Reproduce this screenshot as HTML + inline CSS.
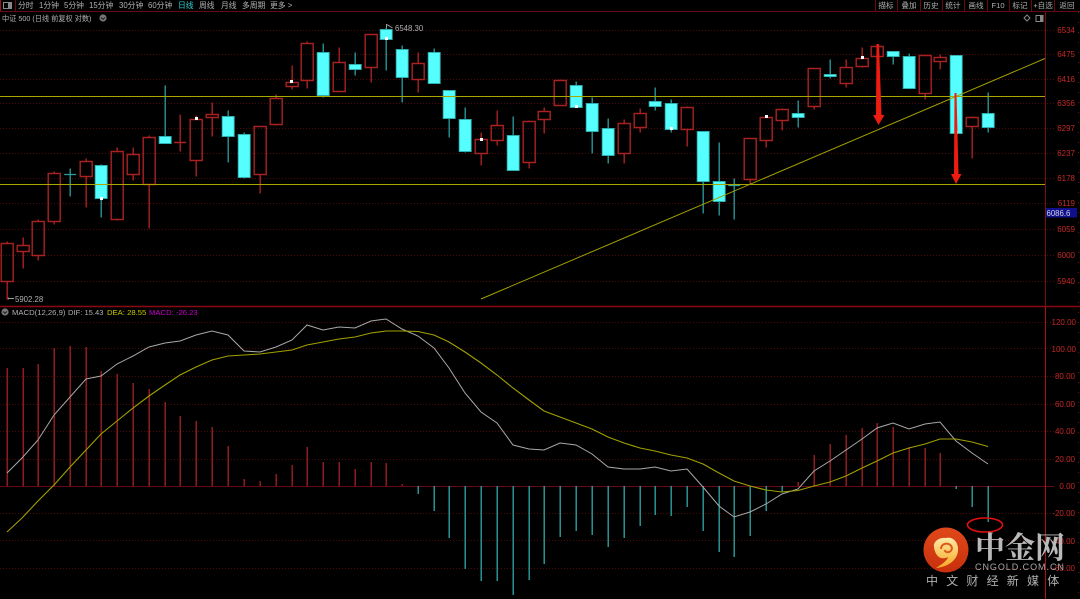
<!DOCTYPE html>
<html><head><meta charset="utf-8"><style>
html,body{margin:0;padding:0;background:#000;width:1080px;height:599px;overflow:hidden}
svg{display:block;position:absolute;left:0;top:0}
text{font-family:"Liberation Sans","Noto Sans CJK SC",sans-serif;font-size:7.8px;fill:#b0b0b0}
.ax text{fill:#c42828;font-size:8px;text-anchor:end}
.tb text{font-size:7.8px;fill:#b0b0b0}
.bt text{font-size:7.6px;fill:#b0b0b0;text-anchor:middle}
.t{filter:blur(.2px)}
</style></head><body>
<svg width="1080" height="599" viewBox="0 0 1080 599">
<rect width="1080" height="599" fill="#000"/>
<!-- grid -->
<g stroke="#500808" stroke-width="1" stroke-dasharray="1 2" fill="none">
<path d="M0 30.5H1054M0 54.5H1054M0 79.5H1054M0 103.5H1054M0 128.5H1054M0 153.5H1054M0 178.5H1054M0 203.5H1054M0 229.5H1054M0 255.5H1054M0 281.5H1054"/>
<path d="M0 322.5H1054M0 348.5H1054M0 376.5H1054M0 404.5H1054M0 431.5H1054M0 459.5H1054M0 513.5H1054M0 540.5H1054M0 568.5H1054"/>
</g>
<!-- frame -->
<path d="M0 11.5H1080" stroke="#660a14" fill="none"/>
<path d="M0 306.5H1080" stroke="#8a0a14" stroke-width="1.4" fill="none"/>
<path d="M0 486.5H1054" stroke="#660a10" fill="none"/>
<path d="M1045.5 12V306" stroke="#7a0e12" fill="none"/>
<path d="M1045.5 307V599" stroke="#b01014" fill="none"/>
<path d="M1078.5 12V599" stroke="#7a0e12" stroke-dasharray="1 9" fill="none"/>
<!-- top bar -->
<path d="M15.5 0V11M875.5 0V11M897.5 0V11M920.5 0V11M942.5 0V11M964.5 0V11M987.5 0V11M1009.5 0V11M1031.5 0V11M1054.5 0V11" stroke="#660a14" fill="none"/>
<path d="M.5 0V11" stroke="#a01018" fill="none"/>
<rect x="3.5" y="2.5" width="8" height="6" fill="none" stroke="#888"/><rect x="8" y="3" width="3" height="5" fill="#888"/>
<g class="t">
<g class="tb">
<text x="18" y="8.2">分时</text><text x="39" y="8.2">1分钟</text><text x="64" y="8.2">5分钟</text><text x="89" y="8.2">15分钟</text><text x="119" y="8.2">30分钟</text><text x="148" y="8.2">60分钟</text><text x="178" y="8.2" style="fill:#2fd0d0">日线</text><text x="199" y="8.2">周线</text><text x="221" y="8.2">月线</text><text x="242" y="8.2">多周期</text><text x="270" y="8.2">更多 &gt;</text>
</g>
<g class="bt">
<text x="886" y="8.2">描标</text><text x="909" y="8.2">叠加</text><text x="931" y="8.2">历史</text><text x="953" y="8.2">统计</text><text x="976" y="8.2">画线</text><text x="998" y="8.2">F10</text><text x="1020" y="8.2">标记</text><text x="1043" y="8.2">+自选</text><text x="1067" y="8.2">返回</text>
</g>
<text x="2" y="21" style="font-size:7.2px">中证 500 (日线 前复权 对数)</text>
<text x="395" y="31">6548.30</text>
<text x="15" y="302">5902.28</text>
<text x="12" y="315" style="font-size:7.7px">MACD(12,26,9)</text>
<text x="68" y="315" style="font-size:7.6px">DIF: 15.43</text>
<text x="107" y="315" style="fill:#c8c800;font-size:7.7px">DEA: 28.55</text>
<text x="149" y="315" style="fill:#c800c8;font-size:7.7px">MACD: -26.23</text>
<g class="ax">
<text x="1075" y="33">6534</text><text x="1075" y="57">6475</text><text x="1075" y="82">6416</text><text x="1075" y="106">6356</text><text x="1075" y="131">6297</text><text x="1075" y="156">6237</text><text x="1075" y="181">6178</text><text x="1075" y="206">6119</text><text x="1075" y="232">6059</text><text x="1075" y="258">6000</text><text x="1075" y="284">5940</text>
<text x="1076" y="325">120.00</text><text x="1076" y="352">100.00</text><text x="1075" y="379">80.00</text><text x="1075" y="407">60.00</text><text x="1075" y="434">40.00</text><text x="1075" y="462">20.00</text><text x="1075" y="489">0.00</text><text x="1075" y="516">-20.00</text><text x="1075" y="544">-40.00</text><text x="1075" y="571">-60.00</text>
</g>
</g>
<rect x="1046" y="208" width="31" height="9.5" fill="#10108c"/>
<text x="1046.5" y="215.8" style="fill:#d0d0e0;font-size:7.8px" class="t">6086.6</text>
<!-- icons -->
<circle cx="103" cy="18" r="3.6" fill="#777"/><path d="M101 17.5l2 1.8 2-1.8" stroke="#222" fill="none"/>
<circle cx="5" cy="312" r="3.6" fill="#777"/><path d="M3 311.5l2 1.8 2-1.8" stroke="#222" fill="none"/>
<path d="M1027 15l3 3-3 3-3-3z" fill="none" stroke="#888"/>
<rect x="1036" y="15.5" width="7" height="6" fill="none" stroke="#888"/><rect x="1040" y="16" width="3" height="5" fill="#888"/>
<path d="M386.5 31V24M386.5 24.5l3 1.5 3 2" stroke="#999" fill="none"/>
<path d="M7 298.5H14" stroke="#999" fill="none"/><circle cx="8" cy="298.5" r="1" fill="#aaa"/>
<!-- candles -->
<g transform="translate(.2 .5)">
<path fill="none" stroke="#a82222" stroke-width="1.4" d="M7 241V243M7 281V299M23 237V245M23 251V268M38 219V221M38 255V260M54 171V173M54 221V224M86 158V161M86 176V207M117 147V151M117 219V220M133 147V154M133 174V180M149 135V137M149 184V228M196 115V119M196 160V176M212 102V114M212 117V136M260 174V193M276 94V98M276 124V125M292 65V82M292 86V89M307 41V43M307 80V88M339 47V62M371 67V82M418 52V63M418 79V92M481 132V139M481 153V165M497 110V125M497 140V145M529 120V121M529 162V168M544 107V111M544 119V133M560 79V80M624 119V123M624 153V163M640 108V113M640 127V132M687 106V107M687 129V146M750 179V184M766 140V147M782 108V109M782 120V130M814 106V109M846 59V67M846 83V87M862 47V58M862 66V67M877 44V46M925 93V99M940 54V57M940 61V69M972 116V117M972 126V158M180 114V151M174 142H186"/>
<path fill="none" stroke="#a82222" stroke-width="1.4" d="M1 243h12v38h-12zM17 245h12v6h-12zM32 221h12v34h-12zM48 173h12v48h-12zM80 161h12v15h-12zM111 151h12v68h-12zM127 154h12v20h-12zM143 137h12v47h-12zM190 119h12v41h-12zM206 114h12v3h-12zM254 126h12v48h-12zM270 98h12v26h-12zM286 82h12v4h-12zM301 43h12v37h-12zM333 62h12v29h-12zM365 34h12v33h-12zM412 63h12v16h-12zM475 139h12v14h-12zM491 125h12v15h-12zM523 121h12v41h-12zM538 111h12v8h-12zM554 80h12v25h-12zM618 123h12v30h-12zM634 113h12v14h-12zM681 107h12v22h-12zM744 138h12v41h-12zM760 117h12v23h-12zM776 109h12v11h-12zM808 68h12v38h-12zM840 67h12v16h-12zM856 58h12v8h-12zM871 46h12v10h-12zM919 55h12v38h-12zM934 57h12v4h-12zM966 117h12v9h-12z"/>
<path fill="none" stroke="#2b9e9e" stroke-width="1.3" d="M101 164V165M101 198V217M165 85V136M228 110V116M228 136V162M244 132V134M244 177V178M323 43V52M323 95V97M355 52V64M355 69V75M386 27V29M386 39V70M402 45V49M402 77V102M434 48V52M449 118V137M465 107V119M465 151V152M513 116V135M576 81V85M592 97V103M592 131V153M608 118V128M608 155V163M655 87V101M655 106V110M671 99V103M671 129V132M703 181V213M719 142V181M719 201V215M798 100V113M798 117V127M830 59V74M830 76V78M893 56V64M909 53V56M988 92V113M988 127V132M70 168V196M64 174H76M734 178V219M728 185H740"/>
<path fill="#55ffff" stroke="#2fb0b0" stroke-width=".9" d="M95 165h12v33h-12zM159 136h12v7h-12zM222 116h12v20h-12zM238 134h12v43h-12zM317 52h12v43h-12zM349 64h12v5h-12zM380 29h12v10h-12zM396 49h12v28h-12zM428 52h12v31h-12zM443 90h12v28h-12zM459 119h12v32h-12zM507 135h12v35h-12zM570 85h12v22h-12zM586 103h12v28h-12zM602 128h12v27h-12zM649 101h12v5h-12zM665 103h12v26h-12zM697 131h12v50h-12zM713 181h12v20h-12zM792 113h12v4h-12zM824 74h12v2h-12zM887 51h12v5h-12zM903 56h12v32h-12zM950 55h12v78h-12zM982 113h12v14h-12z"/>
</g>
<!-- white dots -->
<path fill="#fff" d="M100 197h3v3h-3zM195 117h3v3h-3zM290 80h3v3h-3zM385 37h3v3h-3zM480 138h3v3h-3zM575 105h3v3h-3zM670 127h3v3h-3zM765 115h3v3h-3zM861 56h3v3h-3zM956 131h2v3h-2z"/>
<!-- yellow lines -->
<path d="M0 96.5H1045M0 184.5H1045" stroke="#a8a800" fill="none"/>
<path d="M481 299L1045 58.5" stroke="#a0a000" fill="none"/>
<!-- arrows -->
<path fill="#ee1c10" d="M876.5 44h2.5l2.5 71h3L878.500 125 873 115h3z"/>
<path fill="#ee1c10" d="M954.5 93h2l2 81h3L956 184 951 174h3z"/>
<!-- MACD bars -->
<g transform="translate(.2 0)">
<path fill="none" stroke="#a82222" stroke-width="1.3" d="M7 368V486M23 368V486M38 364V486M54 348V486M70 346V486M86 347V486M101 371V486M117 374V486M133 383V486M149 389V486M165 402V486M180 416V486M196 421V486M212 427V486M228 446V486M244 479V486M260 481V486M276 474V486M292 465V486M307 447V486M323 462V486M339 462V486M355 469V486M371 462V486M386 463V486M402 484V486M798 482V486M814 455V486M830 444V486M846 435V486M862 428V486M877 423V486M893 427V486M909 447V486M925 448V486M940 453V486"/>
<path fill="none" stroke="#2fa8a8" stroke-width="1.3" d="M418 486V494M434 486V511M449 486V538M465 486V569M481 486V581M497 486V581M513 486V595M529 486V580M544 486V564M560 486V537M576 486V531M592 486V535M608 486V547M624 486V538M640 486V526M655 486V515M671 486V516M687 486V507M703 486V531M719 486V552M734 486V557M750 486V536M766 486V511M782 486V492M956 486V489M972 486V507M988 486V522"/>
</g>
<!-- DIF -->
<polyline fill="none" stroke="#a8a8a8" stroke-width="1" points="7,473 22,458 38,440 54,415 70,397 86,379 101,376 117,364 133,356 149,347 165,343 180,341 196,335 212,331 228,335 244,351 260,352 276,347 292,340 307,325 323,330 339,327 355,328 371,321 386,319 402,329 418,336 434,348 449,368 465,393 481,412 497,423 513,445 529,449 544,450 560,443 576,445 592,454 608,467 624,469 640,469 655,467 671,471 687,469 703,487 719,506 734,517 750,512 766,504 782,494 798,489 814,471 830,461 846,450 862,439 877,428 893,423 909,429 925,424 940,422 956,441 972,453 988,464"/>
<!-- DEA -->
<polyline fill="none" stroke="#a0a000" stroke-width="1.1" points="7,532 22,518 38,501 54,485 70,467 86,450 101,434 117,421 133,408 149,396 165,385 180,375 196,367 212,360 228,356 244,355 260,354 276,352 292,350 307,345 323,342 339,339 355,337 371,333 386,331 402,331 418,331.5 434,335 449,342 465,352 481,363 497,375 513,388 529,400 544,411 560,417 576,423 592,429 608,437 624,443 640,448 655,451 671,455 687,458 703,464 719,473 734,481 750,486 766,490 782,492 798,490.5 814,486 830,482 846,476 862,468 877,461 893,453 909,448 925,444 940,439 956,439 972,442 988,446.5"/>
<!-- red ellipse -->
<ellipse cx="985" cy="525" rx="17.5" ry="7" fill="none" stroke="#e01010" stroke-width="1.6"/>
<!-- logo -->
<defs>
<linearGradient id="lg" x1="0" y1="0" x2="0" y2="1"><stop offset="0" stop-color="#e0481a"/><stop offset="1" stop-color="#c8300e"/></linearGradient>
<linearGradient id="ly" x1="0" y1="0" x2="0" y2="1"><stop offset="0" stop-color="#ffe9a8"/><stop offset="1" stop-color="#f6a820"/></linearGradient>
</defs>
<circle cx="946" cy="550" r="22.5" fill="url(#lg)"/>
<path fill="url(#ly)" d="M934 547C933 541 940 537 946 538C953 536 959 543 958 551C957 561 947 567 936 568C942 564 947 561 948 557C941 561 935 556 934 547z"/>
<path fill="none" stroke="#dc5a18" stroke-width="2" d="M941 549C941 542 951 542 952 548C952 552 946 554 944.5 550"/>
<text x="975" y="558" style="font-family:'Noto Serif CJK SC','Noto Sans CJK SC',serif;font-size:30px;font-weight:700;fill:#b9b9b9">中金网</text>
<text x="975" y="570" style="font-size:9px;fill:#a8a8a8;letter-spacing:.95px" class="t">CNGOLD.COM.CN</text>
<text x="926" y="585" style="font-size:12px;fill:#b0b0b0;letter-spacing:8.2px" class="t">中文财经新媒体</text>
</svg>
</body></html>
